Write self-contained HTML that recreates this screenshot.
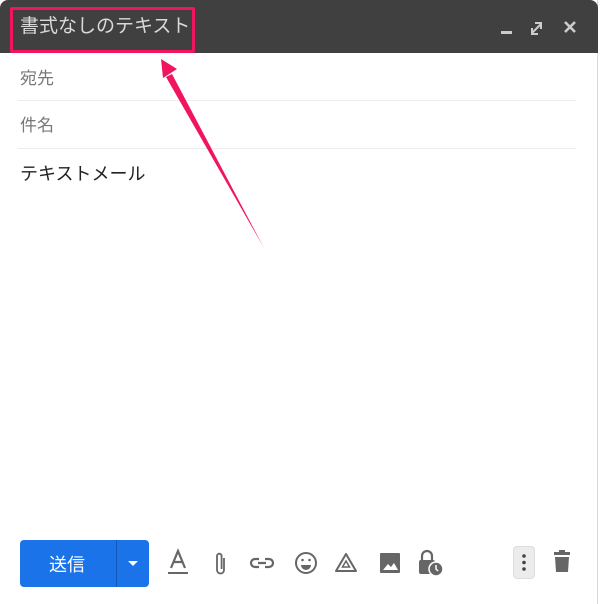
<!DOCTYPE html>
<html><head><meta charset="utf-8"><style>
*{margin:0;padding:0;box-sizing:border-box}
body{width:600px;height:604px;background:#fff;font-family:"Liberation Sans","Noto Sans CJK JP",sans-serif;position:relative;overflow:hidden}
.win{position:absolute;left:0;top:0;width:598px;height:604px;border-right:1px solid #d8d8d8;background:#fff}
.hdr{position:absolute;left:0;top:0;width:598px;height:53px;background:#404040;border-radius:8px 8px 0 0}
.title{position:absolute;left:20px;top:14px;color:#dadada;font-size:19px;line-height:26px}
.box{position:absolute;left:10px;top:7px;width:185px;height:46px;border:3px solid #f0155e;border-radius:2px}
.f{position:absolute;left:20px;color:#777;font-size:17px}
.line{position:absolute;left:18px;width:558px;height:1px;background:#ececec}
.body{position:absolute;left:20px;top:160px;color:#222;font-size:18px}
.send{position:absolute;left:20px;top:540px;width:129px;height:47px;background:#1a73e8;border-radius:4px;color:#fff;font-size:18px}
.send span{position:absolute;left:29px;top:11px}
.send i{position:absolute;left:96px;top:0;width:1px;height:47px;background:#1559b8}
.send b{position:absolute;left:108px;top:21px;width:0;height:0;border-left:5px solid transparent;border-right:5px solid transparent;border-top:5px solid #fff}
.more{position:absolute;left:513px;top:546px;width:22px;height:33px;border-radius:4px;background:#ececec;border:1px solid #ddd}
</style></head><body>
<div class="win">
<div class="hdr"></div>
<div class="title">書式なしのテキスト</div>
<div class="box"></div>
<svg style="position:absolute;left:495px;top:16px" width="90" height="24">
<rect x="6" y="15" width="11" height="3" fill="#ccc"/>
<path d="M37 17l9-9M40 7h6v6M43 18h-6v-6" stroke="#ccc" stroke-width="2" fill="none"/>
<path d="M70 6l10 10M80 6l-10 10" stroke="#ccc" stroke-width="2.6"/>
</svg>
<div class="f" style="top:64px">宛先</div>
<div class="line" style="top:100px"></div>
<div class="f" style="top:111px">件名</div>
<div class="line" style="top:148px"></div>
<div class="body">テキストメール</div>
<div class="send"><span>送信</span><i></i><b></b></div>
<svg style="position:absolute;left:160px;top:548px" width="300" height="32" fill="none" stroke="#666" stroke-width="2">
<path d="M11 20l7-17 7 17M13.5 14h9" stroke-width="2.2"/><rect x="8" y="24" width="20" height="2" fill="#666" stroke="none"/>
<path d="M64 10v12a3.5 3.5 0 0 1-7 0V8a2.3 2.3 0 0 1 4.6 0v13" stroke-width="1.8"/>
<path d="M99 11h-4a4 4 0 0 0 0 8h4M105 11h4a4 4 0 0 1 0 8h-4M98 15h8" stroke-width="2.2"/>
<circle cx="146" cy="15" r="10"/><circle cx="142.5" cy="12" r="1.3" fill="#666" stroke="none"/><circle cx="149.5" cy="12" r="1.3" fill="#666" stroke="none"/><path d="M141 17h10a5 5 0 0 1-10 0z" fill="#666" stroke="none"/>
<path d="M186 6l-10 17h20z" stroke-width="2" stroke-linejoin="round"/><path d="M186 13l-3.5 6h7z" stroke-width="1.5"/>
<rect x="220" y="5" width="20" height="20" rx="1" fill="#666" stroke="none"/><path d="M223 22l5-6 3 3 3-4 4 7z" fill="#fff" stroke="none"/>
<path d="M262 12v-4a5 5 0 0 1 10 0v4" stroke-width="2.2"/><rect x="259" y="12" width="16" height="14" rx="2" fill="#666" stroke="none"/><circle cx="276" cy="21" r="7" fill="#666" stroke="#fff" stroke-width="1.5"/><path d="M276 17v4l2 2" stroke="#fff" stroke-width="1.5"/>
</svg>
<div class="more"></div>
<svg style="position:absolute;left:513px;top:546px" width="22" height="33"><circle cx="11" cy="10" r="1.8" fill="#444"/><circle cx="11" cy="16.5" r="1.8" fill="#444"/><circle cx="11" cy="23" r="1.8" fill="#444"/></svg>
<svg style="position:absolute;left:550px;top:548px" width="25" height="30"><rect x="4" y="4" width="16" height="3" fill="#666"/><rect x="9" y="2" width="6" height="3" fill="#666"/><path d="M5 9h14l-1 15H6z" fill="#666"/></svg>
</div>
<svg style="position:absolute;left:0;top:0" width="600" height="604">
<path d="M264 248L172 74L166 77Z" fill="#f0155e"/>
<path d="M161 59L177 69L163 78Z" fill="#f0155e"/>
</svg>
</body></html>
